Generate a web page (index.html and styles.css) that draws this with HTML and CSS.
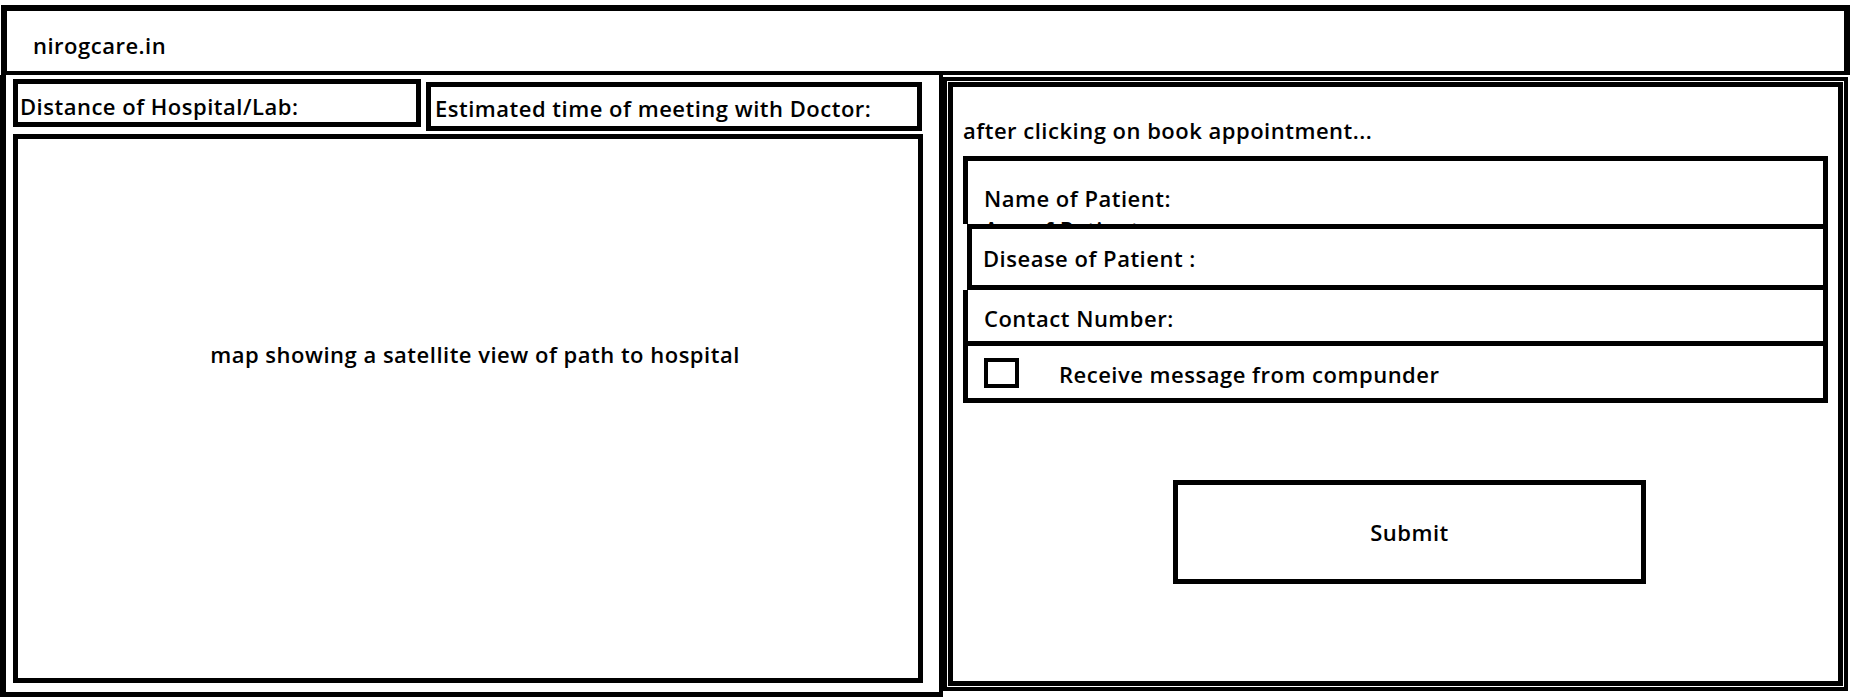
FILE: index.html
```html
<!DOCTYPE html>
<html>
<head>
<meta charset="utf-8">
<title>nirogcare.in</title>
<link rel="stylesheet" href="styles.css">
</head>
<body>
<div class="page">
  <header class="header"><span class="brand">nirogcare.in</span></header>
  <div class="main">
    <section class="left-frame">
      <div class="top-row">
        <div class="info dist">Distance of Hospital/Lab:</div>
        <div class="info est">Estimated time of meeting with Doctor:</div>
      </div>
      <div class="map"><p class="map-text">map showing a satellite view of path to hospital</p></div>
    </section>
    <section class="right-frame">
      <div class="right-inner">
        <p class="note">after clicking on book appointment...</p>
        <div class="form">
          <div class="field name-field"><span class="line">Name of Patient:</span><span class="line">Age of Patient:</span></div>
          <div class="field disease-field">Disease of Patient :</div>
          <div class="field contact-field">Contact Number:</div>
          <div class="field check-field"><span class="checkbox"></span><span>Receive message from compunder</span></div>
        </div>
        <div class="submit">Submit</div>
      </div>
    </section>
  </div>
</div>
</body>
</html>
```

FILE: styles.css
```css
* { box-sizing: border-box; }
body {
  margin: 0;
  background: #fff;
  font-family: "Open Sans", Lato, sans-serif;
  font-weight: 600;
  color: #000;
  font-size: 22px;
  letter-spacing: 0.5px;
  line-height: 28px;
}
p { margin: 0; }
.page { width: 1853px; height: 700px; overflow: hidden; }

.header {
  margin: 5px 3px 0 1px;
  height: 70px;
  border: 6px solid #000;
  border-bottom-width: 4px;
  display: flex;
  align-items: center;
  padding: 8px 0 0 26px;
}

.main { display: flex; align-items: flex-start; }

.left-frame {
  width: 943px;
  height: 622px;
  border-left: 6px solid #000;
  border-right: 4px solid #000;
  border-bottom: 5px solid #000;
  padding: 4px 0 0 7px;
}
.top-row { display: flex; gap: 5px; align-items: flex-start; }
.info {
  border: 5px solid #000;
  display: flex;
  align-items: center;
  padding-left: 2px;
}
.dist { width: 408px; height: 48px; padding-top: 5px; }
.est { width: 496px; height: 49px; margin-top: 3px; padding-left: 4px; padding-top: 2px; }
.map {
  margin-top: 3px;
  width: 910px;
  height: 549px;
  border: 5px solid #000;
  display: flex;
  justify-content: center;
  padding: 201px 0 0 14px;
}

.right-frame {
  margin-top: 2px;
  width: 905px;
  height: 614px;
  border: 4px solid #000;
  padding: 1px;
}
.right-inner {
  height: 100%;
  border: 5px solid #000;
  padding: 29px 0 0 10px;
}
.note { height: 28px; }
.form { margin-top: 12px; width: 865px; }
.field {
  border: 5px solid #000;
  display: flex;
  align-items: center;
}
.name-field {
  height: 68px;
  border-bottom: 0;
  flex-direction: column;
  align-items: flex-start;
  overflow: hidden;
  padding: 23px 0 0 16px;
}
.name-field .line + .line { margin-top: 3px; }
.disease-field { margin-left: 4px; height: 66px; padding: 2px 0 0 11px; }
.contact-field { height: 56px; border-top: 0; padding: 4px 0 0 16px; }
.check-field { height: 57px; border-top: 0; padding: 4px 0 0 16px; gap: 40px; }
.checkbox {
  width: 35px;
  height: 30px;
  border: 4px solid #000;
  flex: none;
  margin-top: -2px;
}
.submit {
  margin: 77px 0 0 210px;
  width: 473px;
  height: 104px;
  border: 5px solid #000;
  display: flex;
  align-items: center;
  justify-content: center;
}
```
